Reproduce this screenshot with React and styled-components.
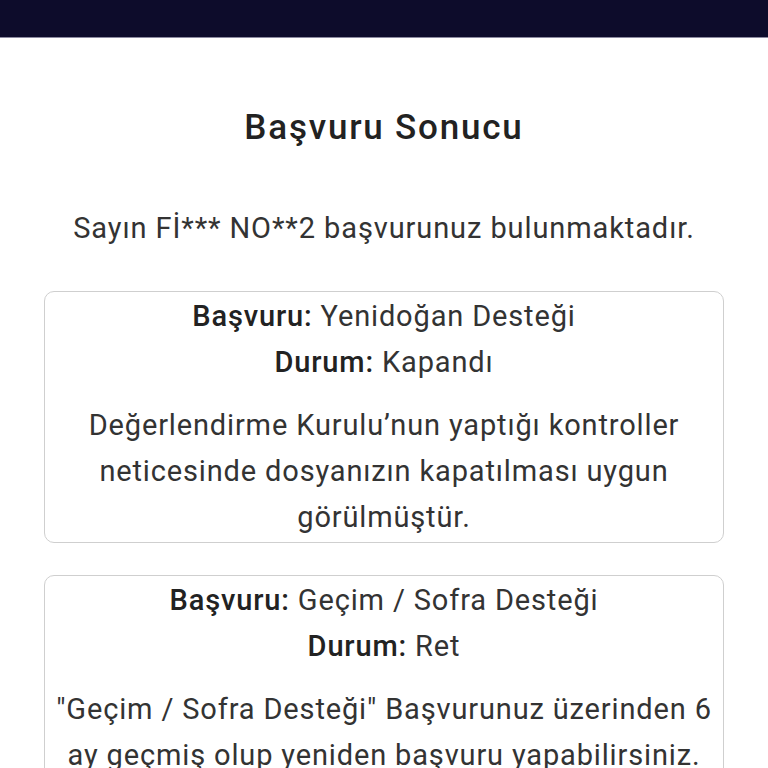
import React from "react";
import styled, { createGlobalStyle } from "styled-components";

const GlobalStyle = createGlobalStyle`
  html, body {
    margin: 0;
    padding: 0;
    background: #ffffff;
    font-family: Roboto, "Noto Sans", Arial, sans-serif;
    color: #333333;
  }
`;

const basvurular = [
  {
    basvuru: "Yenidoğan Desteği",
    durum: "Kapandı",
    aciklama:
      "Değerlendirme Kurulu’nun yaptığı kontroller neticesinde dosyanızın kapatılması uygun görülmüştür.",
  },
  {
    basvuru: "Geçim / Sofra Desteği",
    durum: "Ret",
    aciklama:
      '"Geçim / Sofra Desteği" Başvurunuz üzerinden 6 ay geçmiş olup yeniden başvuru yapabilirsiniz.',
  },
];

const App = () => {
  return (
    <Page>
      <GlobalStyle />
      <TopBar />
      <Content>
        <Title>Başvuru Sonucu</Title>
        <Intro>Sayın Fİ*** NO**2 başvurunuz bulunmaktadır.</Intro>
        <CardList>
          {basvurular.map((b, i) => (
            <Card key={i}>
              <Line>
                <Label>Başvuru:</Label> {b.basvuru}
              </Line>
              <Line>
                <Label>Durum:</Label> {b.durum}
              </Line>
              <Description>{b.aciklama}</Description>
            </Card>
          ))}
        </CardList>
      </Content>
    </Page>
  );
};

export default App;

const Page = styled.div`
  min-height: 768px;
  overflow: hidden;
`;

const TopBar = styled.div`
  height: 37px;
  background-color: #0d0c2b;
  border-bottom: 1px solid #8c8aa0;
`;

const Content = styled.main`
  display: flex;
  flex-direction: column;
  align-items: center;
  padding: 70px 44px 0;
`;

const Title = styled.h1`
  margin: 0;
  font-size: 35px;
  line-height: 40px;
  font-weight: 500;
  letter-spacing: 1.8px;
  color: #222222;
`;

const Intro = styled.p`
  margin: 60px 0 0;
  font-size: 29px;
  line-height: 40px;
  letter-spacing: 0.9px;
  color: #333333;
  white-space: nowrap;
`;

const CardList = styled.div`
  width: 100%;
  display: flex;
  flex-direction: column;
  gap: 32px;
  margin-top: 43px;
`;

const Card = styled.div`
  border: 1px solid #cfcfcf;
  border-radius: 10px;
  padding: 1px 8px 2px;
  text-align: center;
  font-size: 29px;
  line-height: 46px;
  letter-spacing: 0.85px;
  color: #333333;
`;

const Line = styled.div``;

const Label = styled.span`
  font-weight: 500;
  color: #222222;
`;

const Description = styled.p`
  margin: 17px 0 0;
`;
